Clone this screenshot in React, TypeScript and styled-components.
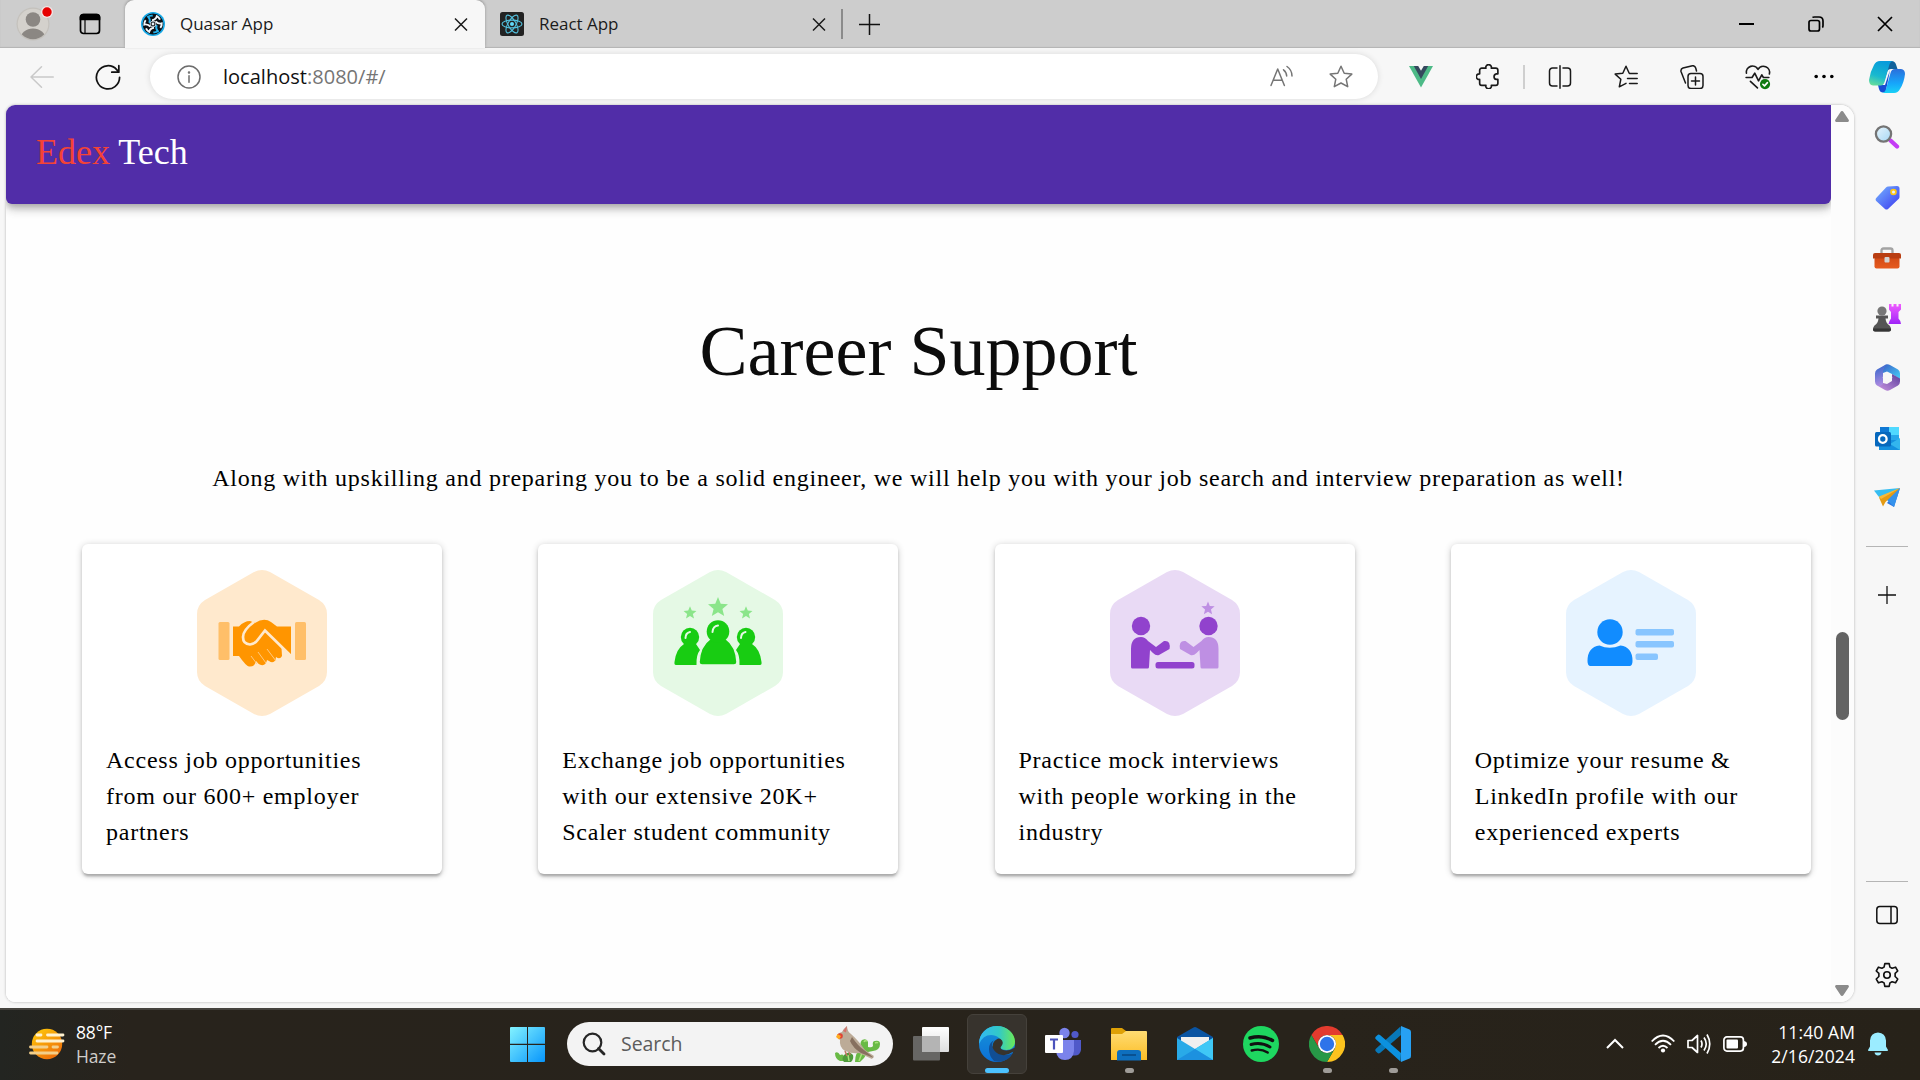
import React from "react";
import styled, { createGlobalStyle } from "styled-components";

const Global = createGlobalStyle`
  * { box-sizing: border-box; }
  html, body { margin: 0; padding: 0; overflow: hidden; }
  svg { display: block; flex: none; }
`;

const ui = `"Open Sans", "Noto Sans", sans-serif`;
const serif = `"Liberation Serif", "Times New Roman", serif`;

const Screen = styled.div`
  width: 1920px;
  height: 1080px;
  display: flex;
  flex-direction: column;
  background: #f7f7f7;
  font-family: ${ui};
  overflow: hidden;
`;

/* ---------- tab strip ---------- */
const TabStrip = styled.div`
  height: 48px;
  flex: none;
  display: flex;
  align-items: center;
  background: #cdcdcd;
  box-shadow: inset 0 -1px 1px #b4b4b4;
`;
const StripLead = styled.div`
  width: 125px;
  display: flex;
  align-items: center;
  padding-left: 14px;
  gap: 24px;
`;
const Tab = styled.div<{ $active?: boolean; $width: number }>`
  width: ${(p) => p.$width}px;
  height: 48px;
  display: flex;
  align-items: center;
  padding: 0 ${(p) => (p.$active ? 17 : 15)}px 0 ${(p) => (p.$active ? 16 : 15)}px;
  background: ${(p) => (p.$active ? "#f7f7f7" : "transparent")};
  border-radius: 9px 9px 0 0;
  box-shadow: ${(p) => (p.$active ? "0 -1px 3px rgba(0,0,0,.28)" : "none")};
`;
const TabTitle = styled.span`
  flex: 1;
  margin-left: 15px;
  font-size: 17px;
  letter-spacing: -0.03px;
  line-height: 24px;
  color: #1b1b1b;
`;
const TabRule = styled.div`
  width: 2px;
  height: 30px;
  background: #8b8b8b;
`;
const NewTab = styled.div`
  margin-left: 16px;
  flex: 1;
`;
const WindowButton = styled.div<{ $last?: boolean }>`
  width: ${(p) => (p.$last ? 70 : 69)}px;
  height: 46px;
  display: flex;
  align-items: center;
  justify-content: center;
`;

/* ---------- address bar ---------- */
const Toolbar = styled.div`
  height: 57px;
  flex: none;
  display: flex;
  align-items: center;
`;
const NavButtons = styled.div`
  width: 150px;
  display: flex;
  align-items: center;
  padding-left: 30px;
  gap: 41px;
`;
const AddressBar = styled.div`
  width: 1228px;
  height: 45px;
  border-radius: 23px;
  background: #fff;
  box-shadow: 0 0 6px rgba(0, 0, 0, 0.12);
  display: flex;
  align-items: center;
  padding: 0 25px 0 27px;
`;
const Url = styled.span`
  flex: 1;
  margin-left: 22px;
  font-size: 20px;
  line-height: 28px;
  letter-spacing: 0.02px;
  color: #111;
  span { color: #757575; }
`;
const AddressActions = styled.div`
  display: flex;
  gap: 35px;
  align-items: center;
`;
const ToolSlot = styled.div<{ $width?: number }>`
  width: ${(p) => p.$width ?? 66}px;
  display: flex;
  justify-content: center;
`;
const Tools = styled.div`
  margin-left: 10px;
  display: flex;
  align-items: center;
`;
const ToolRule = styled.div`
  width: 2px;
  height: 24px;
  margin: 0 2px 0 1px;
  background: #cfcfcf;
`;

/* ---------- body ---------- */
const Body = styled.div`
  height: 903px;
  flex: none;
  display: flex;
  padding-left: 6px;
`;
const FrameShadow = styled.div`
  height: 897px;
  border-radius: 9px 14px 14px 9px;
  box-shadow: 0 0 3px rgba(0, 0, 0, 0.28);
`;
const PageFrame = styled.div`
  width: 1848px;
  height: 897px;
  display: flex;
  border-radius: 9px 14px 14px 9px;
  overflow: hidden;
  background: #fff;
`;
const Page = styled.main`
  width: 1825px;
  overflow: hidden;
  font-family: ${serif};
  background: #fefefe;
`;
const SiteHeader = styled.header`
  height: 99px;
  padding: 20px 30px;
  background: #512da8;
  border-radius: 0 0 6px 6px;
  box-shadow: 0 3px 6px -1px rgba(0, 0, 0, 0.2), 0 6px 8px rgba(0, 0, 0, 0.14),
    0 2px 15px rgba(0, 0, 0, 0.12);
  color: #fff;
  font-size: 36px;
  line-height: 54px;
  white-space: pre;
`;
const Brand = styled.span`
  color: #f44336;
`;
const Heading = styled.h3`
  margin: 110px 0 0;
  font-size: 72px;
  line-height: 75px;
  font-weight: 400;
  text-align: center;
  color: #0c0c0c;
`;
const Lead = styled.p`
  margin: 71px 0 0;
  font-size: 24px;
  line-height: 36px;
  letter-spacing: 0.75px;
  text-align: center;
  color: #000;
`;
const CardGrid = styled.div`
  margin-top: 48px;
  padding-left: 76px;
  display: grid;
  grid-template-columns: repeat(4, 456.25px);
`;
const Card = styled.article`
  width: 360px;
  height: 330px;
  padding: 26px 24px 0;
  border-radius: 6px;
  background: #fff;
  box-shadow: 0 1px 7px rgba(0, 0, 0, 0.2), 0 3px 3px rgba(0, 0, 0, 0.14),
    0 4px 2px -2px rgba(0, 0, 0, 0.12);
  display: flex;
  flex-direction: column;
`;
const CardArt = styled.div`
  display: flex;
  justify-content: center;
  height: 172px;
`;
const CardLine = styled.div`
  font-size: 24px;
  line-height: 36px;
  letter-spacing: 0.75px;
  white-space: nowrap;
  color: #000;
`;
const ScrollTrack = styled.div`
  width: 23px;
  display: flex;
  flex-direction: column;
  align-items: center;
  padding: 6px 1px 6px 0;
  background: #fcfcfc;
`;
const ScrollThumb = styled.div`
  width: 13px;
  height: 88px;
  margin: 510px 0 auto;
  border-radius: 7px;
  background: #636363;
`;

/* ---------- edge sidebar ---------- */
const Sidebar = styled.aside`
  width: 66px;
  height: 903px;
  display: flex;
  flex-direction: column;
  align-items: center;
  padding-top: 2px;
`;
const SideSlot = styled.div`
  height: 60.2px;
  flex: none;
  display: flex;
  align-items: center;
`;
const SideRule = styled.div`
  width: 42px;
  height: 1px;
  flex: none;
  margin: 18px 0;
  background: #b5b5b5;
`;
const SideSpacer = styled.div`
  flex: 1;
`;
const SideBottom = styled.div`
  display: flex;
  flex-direction: column;
  align-items: center;
  height: 127px;
`;
const BottomRule = styled(SideRule)`
  margin: 0 0 3px;
`;

/* ---------- taskbar ---------- */
const Taskbar = styled.footer`
  height: 72px;
  flex: none;
  display: flex;
  align-items: center;
  padding-bottom: 2px;
  background: linear-gradient(90deg, #232521 0, #28231c 130px, #28231b 1300px, #272219 100%);
  border-top: 2px solid #45433e;
`;
const Weather = styled.div`
  width: 495px;
  display: flex;
  align-items: center;
  gap: 11px;
  padding-left: 28px;
`;
const Stack = styled.div<{ $right?: boolean }>`
  font-size: 17.5px;
  line-height: 24px;
  letter-spacing: ${(p) => (p.$right ? 0.1 : -0.15)}px;
  color: #fff;
  text-align: ${(p) => (p.$right ? "right" : "left")};
`;
const Dim = styled.div`
  color: #cfcdca;
`;
const StartButton = styled.div`
  width: 72px;
  display: flex;
  justify-content: flex-start;
  padding-left: 15px;
`;
const SearchBox = styled.div`
  width: 326px;
  height: 44px;
  border-radius: 22px;
  background: #f3f3f3;
  display: flex;
  align-items: center;
  padding: 0 12px 0 15px;
`;
const SearchLabel = styled.span`
  flex: 1;
  margin-left: 15px;
  font-size: 19.5px;
  line-height: 28px;
  letter-spacing: -0.05px;
  color: #5c5c5c;
`;
const Apps = styled.div`
  display: flex;
  gap: 6px;
  margin-left: 8px;
`;
const AppTile = styled.div<{ $active?: boolean }>`
  width: 60px;
  height: 60px;
  border-radius: 6px;
  border: 1px solid ${(p) => (p.$active ? "#45413b" : "transparent")};
  background: ${(p) => (p.$active ? "#37332d" : "transparent")};
  display: flex;
  flex-direction: column;
  align-items: center;
  padding-top: 11px;
`;
const AppMark = styled.div<{ $active?: boolean }>`
  width: ${(p) => (p.$active ? 24 : 9)}px;
  height: 5px;
  margin-top: 6px;
  border-radius: 3px;
  background: ${(p) => (p.$active ? "#4cc2ff" : "#9f9c98")};
`;
const Tray = styled.div`
  margin-left: auto;
  display: flex;
  align-items: center;
`;
const TrayIcons = styled.div`
  display: flex;
  align-items: center;
  gap: 12px;
  margin-left: 27px;
`;
const Clock = styled.div`
  width: 108px;
`;
const Bell = styled.div`
  margin: 0 32px 0 13px;
`;

/* ---------- line icons ---------- */
type LineProps = { size?: number; w?: number; color?: string; children: React.ReactNode };
const Line = ({ size = 24, w = 1.5, color = "#1a1a1a", children }: LineProps) => (
  <svg width={size} height={size} viewBox="0 0 24 24" fill="none" stroke={color} strokeWidth={w} strokeLinecap="round" strokeLinejoin="round">
    {children}
  </svg>
);

const Avatar = () => (
  <svg width="40" height="40" viewBox="0 0 40 40">
    <defs><clipPath id="av"><circle cx="19" cy="20" r="15.3" /></clipPath></defs>
    <circle cx="19" cy="20" r="16.5" fill="#c4c1bc" />
    <circle cx="19" cy="20" r="15.3" fill="#d4d1cc" />
    <g clipPath="url(#av)" fill="#8b8783">
      <circle cx="19" cy="15.5" r="7.3" />
      <ellipse cx="19" cy="35" rx="12.5" ry="10.5" />
    </g>
    <circle cx="33" cy="8" r="6" fill="#f3e4e4" />
    <circle cx="33" cy="8" r="4.7" fill="#e60000" />
  </svg>
);
const WorkspaceIcon = () => (
  <Line w={1.7} color="#000">
    <rect x="2.5" y="2.5" width="19" height="19" rx="3" />
    <path d="M2.5 7.5V5a2.5 2.5 0 0 1 2.5-2.5h14A2.5 2.5 0 0 1 21.5 5v2.5z" fill="#000" />
    <path d="M7 8v13" strokeWidth="1.2" />
  </Line>
);
const QuasarIcon = () => (
  <svg width="24" height="24" viewBox="0 0 24 24">
    <circle cx="12" cy="12" r="12" fill="#17a8e6" />
    <circle cx="12" cy="12" r="10.4" fill="#0b0f14" />
    {[0, 60, 120, 180, 240, 300].map((a, i) => (
      <path key={a} transform={`rotate(${a} 12 12)`} d="M11 8.3Q14.5 8 16 4.2M15 3.6Q18 5 19 7.6" fill="none" strokeWidth="1.9" stroke={i % 3 === 2 ? "#27b3ee" : "#f2f7fa"} />
    ))}
    <circle cx="12" cy="12" r="2.9" fill="none" stroke="#e9f4fa" strokeWidth=".8" />
    <circle cx="12" cy="12" r="1.4" fill="#e9f4fa" />
  </svg>
);
const ReactIcon = () => (
  <svg width="24" height="24" viewBox="0 0 24 24" fill="none" stroke="#53c1de" strokeWidth="1.1">
    <rect width="24" height="24" rx="2.5" fill="#222" stroke="none" />
    {[0, 60, 120].map((a) => <ellipse key={a} cx="12" cy="12" rx="10" ry="3.9" transform={`rotate(${a} 12 12)`} />)}
    <circle cx="12" cy="12" r="2" fill="#61dafb" stroke="none" />
  </svg>
);
const CloseIcon = () => (
  <svg width="14" height="14" viewBox="0 0 14 14" stroke="#1a1a1a" strokeWidth="1.5"><path d="M1 1.5 13 13.5M13 1.5 1 13.5" /></svg>
);
const PlusIcon = ({ size = 21 }: { size?: number }) => (
  <svg width={size} height={size} viewBox="0 0 21 21" stroke="#111" strokeWidth="1.5"><path d="M10.5 0v21M0 10.5h21" /></svg>
);
const BackIcon = () => <Line color="#c9c9c9"><path d="M23.3 12H1M11.5 1.8 1 12l10.5 10.2" /></Line>;
const ReloadIcon = () => (
  <Line size={26} w={1.6} color="#111"><path d="M22.7 12.3A10.7 10.7 0 1 1 20 5.2l1.7 2M22 1.5v6h-6.5" /></Line>
);
const InfoIcon = () => (
  <Line color="#6c6c6c"><circle cx="12" cy="12" r="11" /><path d="M12 10.7v6.5" /><circle cx="12" cy="7.4" r=".5" fill="#6c6c6c" /></Line>
);
const ReadAloudIcon = () => (
  <Line color="#757575"><path d="M1 20.5 7.7 4l6.7 16.5M3.2 15.3h9M13.5 4.8q3 2.3 3.2 6.2M17 1.5q5 3.5 5 9.5" /></Line>
);
const StarIcon = () => (
  <Line color="#757575"><path d="M12 1.3l3.2 6.9 7.6.9-5.6 5.1 1.5 7.5L12 18l-6.7 3.7 1.5-7.5L1.2 9.1l7.6-.9z" /></Line>
);
const VueIcon = () => (
  <svg width="24" height="22" viewBox="0 0 24 22"><path d="M0 0h24L12 21.5z" fill="#4dba87" /><path d="M4.8 0H19.2L12 13z" fill="#35495e" /><path d="M9.2 0h5.6L12 4.8z" fill="#f7f7f7" /></svg>
);
const PuzzleIcon = () => (
  <Line size={25} w={1.6}><path d="M5.5 4h4a2.7 2.7 0 1 1 5.2 0h4.3a2 2 0 0 1 2 2v3.500h-1.500a2.7 2.7 0 0 0 0 5.3H21V18.500a2 2 0 0 1-2 2h-4.300a2.7 2.7 0 1 1-5.200 0h-4a2 2 0 0 1-2-2v-3.700a2.7 2.7 0 1 1 0-5.300V6a2 2 0 0 1 2-2z" /></Line>
);
const SplitIcon = () => (
  <Line><path d="M9 3H4.500A3 3 0 0 0 1.500 6v12a3 3 0 0 0 3 3H9M15 3h4.500a3 3 0 0 1 3 3v12a3 3 0 0 1-3 3H15M12 .8v22.400" /></Line>
);
const FavoritesIcon = () => (
  <Line><path d="M8.800 8.200l-7.600.9 5.600 5.200-1.500 7.500L12 18.300M8.800 8.200 12 1.300l3.200 6.900M15.500 8.500h7.700M13.500 13.500h9.700M15.500 18.500h7.700" /></Line>
);
const CollectionsIcon = () => (
  <Line><rect x="8" y="8.500" width="15" height="15" rx="3" /><path d="M15.500 12v8M11.500 16h8M5.500 18 1 6.500Q.5 4 3 3l9.500-2.300Q15 .5 15.700 3l.8 3" /></Line>
);
const HeartIcon = () => (
  <Line size={26}><path d="M1.300 8.500A5.700 5.700 0 0 1 12 5a5.700 5.700 0 0 1 10.500 4.200M1 12.500h5.500l2.500-4 3.500 7 3-5.500 1.500 2.500h5M5 16l6.500 6" /><circle cx="18.500" cy="18.500" r="4.700" fill="#0f7b10" stroke="none" /><path d="m16.500 18.700 1.500 1.500 2.700-3" stroke="#fff" /></Line>
);
const DotsIcon = () => (
  <svg width="20" height="5" viewBox="0 0 20 5"><circle cx="2.2" cy="2.5" r="1.8" /><circle cx="10" cy="2.5" r="1.8" /><circle cx="17.8" cy="2.5" r="1.8" /></svg>
);
const CopilotIcon = () => (
  <svg width="36" height="34" viewBox="0 0 36 34">
    <defs>
      <linearGradient id="cp1" x1=".5" y1="0" x2=".2" y2="1"><stop stopColor="#079bdb" /><stop offset=".6" stopColor="#19b9cf" /><stop offset="1" stopColor="#68de9a" /></linearGradient>
      <linearGradient id="cp2" x1=".5" y1="0" x2=".5" y2="1"><stop stopColor="#2b6fdb" /><stop offset=".6" stopColor="#16a6fb" /><stop offset="1" stopColor="#19d0f6" /></linearGradient>
    </defs>
    <path d="M18 1h4.500q3.500 0 4.500 3.500L28.500 9H22q-3 0-4 3l-3 10z" fill="#10619b" />
    <path d="M9 25h7l5-15-4 20.500q-1 2.500-3 2-3 0-4-3.500z" fill="#164ed4" />
    <path d="M11 1h13q-3 .5-4 5l-4.500 16q-1 3.500-4 3.500H4Q0 25 0 20 1 12 5 5q2-4 6-4z" fill="url(#cp1)" />
    <path d="M25 33H13q3-.5 4-4l4.500-16q1-4 4.500-4h6q4 .5 4 5-1 9-5 15-2 4-6 4z" fill="url(#cp2)" />
  </svg>
);

/* ---------- sidebar icons ---------- */
const SearchColor = () => (
  <svg width="26" height="26" viewBox="0 0 26 26">
    <defs><linearGradient id="lens" x1="0" y1="0" x2="1" y2="1"><stop stopColor="#e8f5fd" /><stop offset="1" stopColor="#a6d8f4" /></linearGradient></defs>
    <path d="m16.500 16.500 6.500 6" stroke="#c43cf5" strokeWidth="4.300" strokeLinecap="round" />
    <circle cx="9.500" cy="10" r="7.600" fill="url(#lens)" stroke="#747474" strokeWidth="2.300" />
  </svg>
);
const TagColor = () => (
  <svg width="25" height="25" viewBox="0 0 25 25">
    <defs><linearGradient id="tg" x1="0" y1="0" x2="1" y2="1"><stop stopColor="#76b6ff" /><stop offset="1" stopColor="#3a36ef" /></linearGradient></defs>
    <path d="M13 1.500 22 1q2.500 0 2.500 2.500V12q0 1-.7 1.800L13 24q-1.500 1.200-3 0L1.200 16q-1.200-1.500 0-3L11 2.500Q12 1.500 13 1.500z" fill="url(#tg)" />
    <circle cx="18.500" cy="7" r="2.400" fill="#e8edff" stroke="#ffc712" strokeWidth="1.800" />
  </svg>
);
const ToolboxColor = () => (
  <svg width="28" height="24" viewBox="0 -2 28 24">
    <defs><linearGradient id="tb" x1="0" y1="0" x2="0" y2="1"><stop stopColor="#d24a15" /><stop offset="1" stopColor="#e65a1e" /></linearGradient></defs>
    <path d="M8.500 7V3.500q0-2 2-2h7q2 0 2 2V7" fill="none" stroke="#a3a3a3" strokeWidth="2.300" />
    <rect x="1.500" y="10" width="25" height="11.500" rx="2" fill="url(#tb)" />
    <path d="M0 8q0-2 2-2h24q2 0 2 2v3.500H0z" fill="#b93e12" />
    <rect x="11.500" y="10" width="5" height="5.500" rx="1" fill="#d3d3d3" />
  </svg>
);
const ChessColor = () => (
  <svg width="28" height="28" viewBox="0 0 28 28">
    <defs><linearGradient id="rk" x1="0" y1="0" x2="0" y2="1"><stop stopColor="#f05cff" /><stop offset="1" stopColor="#9f24f8" /></linearGradient></defs>
    <path d="M16 0h2.500v2.500h2V0h3v2.500h2V0H28v5.500L25.500 8v6.500q2.500 2.500 2.500 5.500H15.500q.5-3 2.500-5.500V8L16 5.500z" fill="url(#rk)" />
    <circle cx="9" cy="7" r="4.600" fill="#777" />
    <path d="M3 11.500h12v3h-2.500q.5 5 4 7 1.500 1.500 1.500 4 0 2-2 2H2q-2 0-2-2 0-2.500 1.500-4 3.500-2 4-7H3z" fill="#555" />
    <path d="M0 25.500q0 2 2 2h14q2 0 2-2v-1H0z" fill="#353535" />
  </svg>
);
const M365Color = () => (
  <svg width="25" height="27" viewBox="0 0 25 27">
    <defs>
      <linearGradient id="m1" x1=".2" y1="0" x2=".4" y2="1"><stop stopColor="#2f66cc" /><stop offset="1" stopColor="#b08be0" /></linearGradient>
      <linearGradient id="m2" x1="0" y1="0" x2="1" y2="1"><stop stopColor="#3a62c8" /><stop offset="1" stopColor="#46d0f8" /></linearGradient>
      <linearGradient id="m3" x1="0" y1="1" x2="1" y2="0"><stop stopColor="#c894e0" /><stop offset="1" stopColor="#5d3f9c" /></linearGradient>
    </defs>
    <path d="M10 1q2.500-1.300 5 0l8 4.500Q25 7 25 9.500V15l-8-5-5-2.500L8 9V5z" fill="url(#m2)" />
    <path d="M3 22l7 4q2.500 1.300 5 0l8-4.500q2-1.500 2-4V14.500l-8-4.500v7l-5 3-4-1z" fill="url(#m3)" />
    <path d="M10 1 2 5.500Q0 7 0 9.500v8Q0 20 2 21.500q2 1 4 0L8 20V7q.5-4 4-6.700z" fill="url(#m1)" />
    <circle cx="12.500" cy="13.500" r="4.700" fill="#f7f7f7" />
  </svg>
);
const OutlookColor = () => (
  <svg width="25" height="25" viewBox="0 0 25 25">
    <path d="M5 1h19v22H5z" fill="#28a8ea" /><path d="M14 1h10v8H14z" fill="#50d9ff" /><path d="M5 1h9v7H5z" fill="#0f78d4" />
    <path d="M4 14h21v10H4z" fill="#1490df" /><path d="M25 12v12l-10-6z" fill="#33b5ee" />
    <rect y="6" width="16" height="14.500" rx="1.500" fill="#0668bd" />
    <circle cx="7.800" cy="13" r="3.800" fill="none" stroke="#fff" strokeWidth="2.300" />
  </svg>
);
const PlaneColor = () => (
  <svg width="26" height="20" viewBox="0 0 26 20">
    <path d="M0 2.500 26 0 9 12 5 9z" fill="#35bdf1" />
    <path d="M26 0 20 19l-7-4z" fill="#2a73df" /><path d="M26 0 10 9l10 10z" fill="#3492ec" />
    <path d="M26 0 5 9.500l4 9L11.500 14z" fill="#e49b14" /><path d="M26 0 5 8.500l2 2.500z" fill="#f6b93a" />
  </svg>
);
const PanelIcon = () => (
  <svg width="22" height="20" viewBox="0 0 22 20" fill="none" stroke="#111" strokeWidth="1.500"><rect x=".8" y="1.500" width="20.400" height="17" rx="3" /><path d="M15 1.500v17" /></svg>
);
const GearIcon = () => (
  <Line size={26} w={1.5} color="#111">
    <path d="M10 1.500h4l.7 3.200 2 1.100 3.200-1 2 3.500-2.400 2.200v2.900l2.400 2.300-2 3.500-3.200-1-2 1.100-.7 3.200h-4l-.7-3.200-2-1.100-3.200 1-2-3.500 2.400-2.300v-2.900L2.100 8.300l2-3.500 3.200 1 2-1.100z" /><circle cx="12" cy="12" r="3" />
  </Line>
);

/* ---------- card art ---------- */
const Hexagon = ({ fill, children }: { fill: string; children: React.ReactNode }) => (
  <svg width="130" height="146" viewBox="0 0 130 146">
    <path d="M57 2Q65-2 73 2L122 30Q130 35 130 44V102Q130 111 122 116L73 144Q65 148 57 144L8 116Q0 111 0 102V44Q0 35 8 30Z" fill={fill} />
    {children}
  </svg>
);
const Star = ({ x, y, s, fill }: { x: number; y: number; s: number; fill: string }) => (
  <path transform={`translate(${x} ${y}) scale(${s})`} fill={fill} d="M0-1 .26-.36.95-.31.42.14.59.81 0 .45-.59.81-.42.14-.95-.31-.26-.36Z" />
);
const HandshakeArt = () => (
  <Hexagon fill="#ffe9cd">
    <rect x="21.500" y="52" width="11" height="38" rx="1.500" fill="#ffbf69" />
    <rect x="98" y="52" width="11" height="38" rx="1.500" fill="#ffbf69" />
    <path d="M36 56.500H42Q47 51 53 51L58 53Q67 47 74 52L80 56.500H94V86L84.500 78 85 86Q83 90 79 87L78.500 90Q76 94 72 91L70 90Q69 96 64 95Q61 94 59 91Q58 97 52 96.500Q49 96 42 86H36Z" fill="#ff9500" />
    <path d="M57 52Q46 60 46 67 46 74 53 74.500 58 74 61 69.500L68 60.500 95 87" fill="none" stroke="#ffe9cd" strokeWidth="2.700" />
    <path d="m54 86 6 8m1-12 8 11m1-14 9 12" stroke="#ffcf8e" strokeWidth=".9" />
  </Hexagon>
);
const SidePerson = () => (
  <>
    <circle cx="37" cy="67" r="9.200" />
    <path d="M31 74H43L47 80Q43 85 43.500 95H23Q21 95 21.500 92 23 79 31 74Z" />
  </>
);
const CommunityArt = () => (
  <Hexagon fill="#e5f9e5">
    <Star x={65} y={37.5} s={10.5} fill="#8be58a" />
    <Star x={37} y={43} s={6.8} fill="#8be58a" />
    <Star x={93} y={43} s={6.8} fill="#8be58a" />
    <g fill="#18cc12">
      <SidePerson />
      <g transform="translate(130 0) scale(-1 1)"><SidePerson /></g>
      <path d="M57 69Q47 76 46 92 46 95 49 95H81Q84 95 84 92 83 76 73 69Z" stroke="#e5f9e5" strokeWidth="1.500" />
      <circle cx="65" cy="61.500" r="11.300" />
    </g>
    <path d="M32.500 68Q32.500 63 37 62M59.500 62Q60 56 65 55.500M88 68Q88 63 92.500 62" fill="none" stroke="#e5f9e5" strokeWidth="2" strokeLinecap="round" />
  </Hexagon>
);
const bodyPath = "M21 97V79Q21 67 31 67 35 67 38 71L46 77 54 71Q61 70 59.500 79L49 85Q46 86 43 83L40 80 39 97Q39 98.500 37.500 98.500H22.500Q21 98.500 21 97Z";
const InterviewArt = () => (
  <Hexagon fill="#e9daf5">
    <Star x={98} y={38.5} s={7} fill="#be8fe3" />
    <circle cx="31" cy="56" r="9.200" fill="#9142cd" />
    <circle cx="98.500" cy="56" r="9.200" fill="#9142cd" />
    <path d={bodyPath} fill="#9142cd" />
    <path d={bodyPath} fill="#be8fe3" transform="translate(129.500 0) scale(-1 1)" />
    <rect x="45.500" y="92" width="39" height="6.500" rx="2.500" fill="#9142cd" />
  </Hexagon>
);
const ResumeArt = () => (
  <Hexagon fill="#e6f3ff">
    <circle cx="44" cy="62" r="12.700" fill="#118cff" />
    <path d="M33.500 75.500Q43.500 80 54.500 75.500 66.500 77 66.500 91 66.500 96 63.500 96H24.500Q21.500 96 21.500 91 21.500 77 33.500 75.500Z" fill="#118cff" />
    <g fill="#88c5ff"><rect x="69.500" y="59" width="38.500" height="6.500" rx="2" /><rect x="69.500" y="71" width="38.500" height="6.500" rx="2" /><rect x="69.500" y="83.500" width="22.500" height="6.500" rx="2" /></g>
  </Hexagon>
);

/* ---------- taskbar icons ---------- */
const HazeIcon = () => (
  <svg width="37" height="34" viewBox="0 0 37 34">
    <defs><linearGradient id="sun" x1="0" y1="0" x2=".7" y2="1"><stop stopColor="#ffcf0a" /><stop offset="1" stopColor="#ee6d09" /></linearGradient></defs>
    <circle cx="19" cy="17" r="15.200" fill="url(#sun)" />
    <g strokeWidth="2.800" strokeLinecap="round"><path d="M9 8h4M19.500 8H35M9 14h26" stroke="#fff1cf" /><path d="M2.500 20H19M25 20h4.500M2.500 26H29" stroke="#f3cf8a" /></g>
  </svg>
);
const WindowsIcon = () => (
  <svg width="35" height="35" viewBox="0 0 35 35">
    <defs><linearGradient id="win" gradientUnits="userSpaceOnUse" x1="0" y1="0" x2="35" y2="35"><stop stopColor="#83f3ff" /><stop offset="1" stopColor="#0795fb" /></linearGradient></defs>
    <path d="M1 0h16v16.800H0V1q0-1 1-1zM18 0h16q1 0 1 1v15.800H18zM0 18h17v17H1q-1 0-1-1zM18 18h17v16q0 1-1 1H18z" fill="url(#win)" />
  </svg>
);
const MagnifierIcon = () => (
  <svg width="24" height="24" viewBox="0 0 24 24" fill="none" stroke="#262626" strokeWidth="2.200"><circle cx="10.500" cy="10.500" r="8.800" /><path d="m16.500 16.500 5.500 5.500" strokeWidth="2.800" strokeLinecap="round" /></svg>
);
const BirdIcon = () => (
  <svg width="47" height="38" viewBox="0 0 47 38">
    <g fill="#69ba45">
      <path d="M1 28q3-2 5 2 4-2 4 3l2 3H6Q1 34 1 28z" />
      <path d="M10 30q5-5 9 0 1 4-2 7H10q-3-3 0-7z" fill="#4f9a3b" />
      <path d="M21 37q0-10 7-14-3-5 0-8 5-2 6 2v5q4 1 5-1-1-5 2-5 5-1 5 3 0 6-7 7l-5 1-4 6-4 4z" />
    </g>
    <path d="M30 17q1-2 3-1M41 18q2-1 3 0M14 30l1 6M28 28l-3 8" stroke="#a9e27a" strokeWidth="1.500" fill="none" />
    <path d="M11 26l2 5M15 26l1 4" stroke="#c67262" strokeWidth="1.500" />
    <path d="M13 1Q9 4 8 7 3 8 3 12l3 3Q5 22 11 26q8 3 14 2l13 6 2-3-9-6Q24 15 17 9 13 6 13 1z" fill="#bcab97" />
    <path d="M18 12q6 9 12 13l10 8-13-5Q19 23 16 16z" fill="#87705f" />
    <path d="M13 1 9 6l3 1.500z" fill="#d3706b" />
    <circle cx="6" cy="11" r="2.800" fill="#e04435" /><path d="M3.500 9 2 12l3 2.500L7 11z" fill="#ffab22" />
  </svg>
);
const TaskViewIcon = () => (
  <svg width="36" height="36" viewBox="0 0 36 36">
    <defs><linearGradient id="tv" x1="0" y1="0" x2="0" y2="1"><stop stopColor="#fff" /><stop offset="1" stopColor="#dedede" /></linearGradient></defs>
    <rect x="9" y="1" width="27" height="25" rx="1" fill="url(#tv)" /><rect y="10" width="27" height="24.500" rx="1" fill="#777" fillOpacity=".8" /><path d="M9 10h18v16H9z" fill="#b4b4b4" />
  </svg>
);
const EdgeIcon = () => (
  <svg width="36" height="36" viewBox="0 0 36 36">
    <defs>
      <linearGradient id="e1" x1="0" y1=".5" x2="1" y2=".5"><stop stopColor="#32b9f4" /><stop offset=".55" stopColor="#32c9c8" /><stop offset="1" stopColor="#6bea57" /></linearGradient>
      <linearGradient id="e2" x1="0" y1="0" x2="0" y2="1"><stop stopColor="#1793d8" /><stop offset="1" stopColor="#0b70d8" /></linearGradient>
    </defs>
    <circle cx="18" cy="18" r="18" fill="url(#e2)" />
    <path d="M0 18C0 7 8 0 18 0s18 7.500 18 15.500C36 21 32 24 27.500 24c-3.500 0-6-1-6-2.500s1.500-2 1.500-5S18 9 12 9Q4 9 0 18z" fill="url(#e1)" />
    <path d="M16 14q-6 2-6 9t5 12Q28 38 34 27q-7 3.500-13 .5t-8-8Q13 15 16 14z" fill="#114e94" />
    <path d="M17.500 13.500q-4 2-4 7.500 1 4 6 7 7 3 14-2 2-1 1 1 2-3 1.500-5.500-6 4-12 2.500-4-1.500-1.500-4 3-4-1-7-2-1-4 .5z" fill="#37332d" />
  </svg>
);
const TeamsIcon = () => (
  <svg width="36" height="36" viewBox="0 0 36 36">
    <circle cx="30" cy="8.500" r="3.600" fill="#5059c9" /><circle cx="19.500" cy="7" r="5.200" fill="#7b83eb" />
    <path d="M26 14h10v10q-1 6-7 5.500h-4z" fill="#5059c9" /><path d="M11 14h18v11q-1 9-9 9t-9-9z" fill="#7b83eb" />
    <rect y="9" width="18" height="18" rx="1" fill="#fff" /><path d="M5 13.500h8M9 13.500V23.500" stroke="#4b53bc" strokeWidth="2.200" fill="none" />
  </svg>
);
const FolderIcon = () => (
  <svg width="36" height="36" viewBox="0 0 36 36">
    <defs><linearGradient id="fd" x1="0" y1="0" x2="0" y2="1"><stop stopColor="#ffdc73" /><stop offset="1" stopColor="#fcbd25" /></linearGradient></defs>
    <path d="M0 3q0-1 1-1h10l4 3v8H0z" fill="#dfa106" /><path d="M0 8h11l4-3h20q1 0 1 1v28H0z" fill="url(#fd)" />
    <path d="M6 34.500V27q0-3 3-3h18q3 0 3 3v7.500z" fill="#0e6fbe" /><path d="M11 29h14" stroke="#094b86" strokeWidth="1.600" />
  </svg>
);
const MailIcon = () => (
  <svg width="36" height="36" viewBox="0 0 36 36">
    <path d="M0 11 16.500 1.500q1.500-1 3 0L36 11v8H0z" fill="#0a54a2" /><path d="M4 11h28v10l-14 6-14-6z" fill="#f0f0f0" /><path d="M0 12l18 11L36 12v22H0z" fill="#29aae8" /><path d="m36 12-18 11 18 11z" fill="#3fc8f6" /><path d="M0 34h36L18 23z" fill="#1c91df" />
  </svg>
);
const SpotifyIcon = () => (
  <svg width="36" height="36" viewBox="0 0 36 36"><circle cx="18" cy="18" r="18" fill="#1ed760" /><g fill="none" stroke="#111" strokeLinecap="round"><path d="M7 12q12-3.500 22.500 2.500" strokeWidth="3.500" /><path d="M8 18.500q10-3 19 2.500" strokeWidth="2.900" /><path d="M8.700 24.500q9-2.500 16 2" strokeWidth="2.400" /></g></svg>
);
const ChromeIcon = () => (
  <svg width="36" height="36" viewBox="0 0 36 36">
    <path d="M2.400 9A18 18 0 0 1 33.600 9H18a9 9 0 0 0-7.800 13.500z" fill="#e33b2e" />
    <path d="M33.600 9A18 18 0 0 1 18 36l7.800-13.500A9 9 0 0 0 18 9z" fill="#fcc31e" />
    <path d="M18 36A18 18 0 0 1 2.400 9l7.800 13.500A9 9 0 0 0 25.800 22.500z" fill="#279847" />
    <circle cx="18" cy="18" r="9" fill="#fff" /><circle cx="18" cy="18" r="7.200" fill="#2d74ea" />
  </svg>
);
const CodeIcon = () => (
  <svg width="36" height="36" viewBox="0 0 36 36">
    <path d="m26 9-21 18q-1.500 1-2.700-.2L.7 25.200q-1-1.200.2-2.400L25.500.5z" fill="#0878b9" />
    <path d="M26 27 5 9Q3.500 8 2.300 9.200L.7 10.800q-1 1.200.2 2.400L25.500 35.500z" fill="#0c91df" />
    <path d="m26 0 8.500 3.500Q36 4 36 6v24q0 2-1.500 2.500L26 36z" fill="#27a1f3" />
  </svg>
);
const ChevronIcon = () => <svg width="18" height="12" viewBox="0 0 18 12" fill="none" stroke="#fff" strokeWidth="2"><path d="m1 10 8-8 8 8" /></svg>;
const WifiIcon = () => (
  <svg width="24" height="20" viewBox="0 0 24 20" fill="none" stroke="#fff" strokeWidth="1.800"><path d="M.7 7.500Q12-4.500 23.300 7.500M4 10.800q8-8 16 0M7.500 14q4.500-4.500 9 0" /><circle cx="12" cy="16.500" r="2.100" fill="#fff" stroke="none" /></svg>
);
const SpeakerIcon = () => (
  <svg width="24" height="22" viewBox="0 0 24 22" fill="none" stroke="#fff" strokeWidth="1.700" strokeLinejoin="round"><path d="M1 7.500h4L10.500 2.500v17L5 14.500H1zM14 7.500q2 3.500 0 7M17 4.500q4.500 6.500 0 13M20 1.500q5.500 9.500 0 19" /></svg>
);
const BatteryIcon = () => (
  <svg width="24" height="16" viewBox="0 0 24 16"><rect x=".9" y=".9" width="19.500" height="14.200" rx="3" fill="none" stroke="#fff" strokeWidth="1.700" /><rect x="3.500" y="3.500" width="11.500" height="9" rx="1" fill="#fff" /><path d="M21 5q3 .5 3 3t-3 3z" fill="#fff" /></svg>
);
const BellIcon = () => (
  <svg width="20" height="24" viewBox="0 0 20 24" fill="#9becff"><path d="M10 .5Q17.500 1 18 8.500V14.500L20 18q.3 1-1 1H1q-1.300 0-1-1l2-3.500V8.500Q2.500 1 10 .5zM6.500 20.500h7q-.5 3-3.500 3t-3.500-3z" /></svg>
);

const cards = [
  { art: <HandshakeArt />, lines: ["Access job opportunities", "from our 600+ employer", "partners"] },
  { art: <CommunityArt />, lines: ["Exchange job opportunities", "with our extensive 20K+", "Scaler student community"] },
  { art: <InterviewArt />, lines: ["Practice mock interviews", "with people working in the", "industry"] },
  { art: <ResumeArt />, lines: ["Optimize your resume &", "LinkedIn profile with our", "experienced experts"] },
];
const sideApps = [SearchColor, TagColor, ToolboxColor, ChessColor, M365Color, OutlookColor, PlaneColor];
const taskApps = [
  { Icon: TaskViewIcon }, { Icon: EdgeIcon, active: true }, { Icon: TeamsIcon }, { Icon: FolderIcon, open: true },
  { Icon: MailIcon }, { Icon: SpotifyIcon }, { Icon: ChromeIcon, open: true }, { Icon: CodeIcon, open: true },
];

export default function App() {
  return (
    <Screen>
      <Global />
      <TabStrip>
        <StripLead><Avatar /><WorkspaceIcon /></StripLead>
        <Tab $active $width={360}><QuasarIcon /><TabTitle>Quasar App</TabTitle><CloseIcon /></Tab>
        <Tab $width={356}><ReactIcon /><TabTitle>React App</TabTitle><CloseIcon /></Tab>
        <TabRule />
        <NewTab><PlusIcon /></NewTab>
        <WindowButton><svg width="15" height="2" viewBox="0 0 15 2"><path d="M0 0h15v2H0z" /></svg></WindowButton>
        <WindowButton>
          <svg width="16" height="16" viewBox="0 0 16 16" fill="none" stroke="#000" strokeWidth="1.700"><rect x="1" y="4.500" width="10.500" height="10.500" rx="2" /><path d="M4.500 1.500Q5 1 6.500 1H11q4 0 4 4v4.500q0 1.500-.7 2" /></svg>
        </WindowButton>
        <WindowButton $last><svg width="16" height="16" viewBox="0 0 16 16" stroke="#000" strokeWidth="1.700"><path d="m1 1 14 14M15 1 1 15" /></svg></WindowButton>
      </TabStrip>

      <Toolbar>
        <NavButtons><BackIcon /><ReloadIcon /></NavButtons>
        <AddressBar>
          <InfoIcon />
          <Url>localhost<span>:8080/#/</span></Url>
          <AddressActions><ReadAloudIcon /><StarIcon /></AddressActions>
        </AddressBar>
        <Tools>
          <ToolSlot><VueIcon /></ToolSlot>
          <ToolSlot $width={68}><PuzzleIcon /></ToolSlot>
          <ToolRule />
          <ToolSlot><SplitIcon /></ToolSlot>
          <ToolSlot><FavoritesIcon /></ToolSlot>
          <ToolSlot><CollectionsIcon /></ToolSlot>
          <ToolSlot><HeartIcon /></ToolSlot>
          <ToolSlot><DotsIcon /></ToolSlot>
          <ToolSlot $width={60}><CopilotIcon /></ToolSlot>
        </Tools>
      </Toolbar>

      <Body>
        <FrameShadow>
          <PageFrame>
            <Page>
              <SiteHeader><Brand>Edex</Brand> Tech</SiteHeader>
              <Heading>Career Support</Heading>
              <Lead>Along with upskilling and preparing you to be a solid engineer, we will help you with your job search and interview preparation as well!</Lead>
              <CardGrid>
                {cards.map((c) => (
                  <Card key={c.lines[0]}>
                    <CardArt>{c.art}</CardArt>
                    {c.lines.map((l) => <CardLine key={l}>{l}</CardLine>)}
                  </Card>
                ))}
              </CardGrid>
            </Page>
            <ScrollTrack>
              <svg width="14" height="11" viewBox="0 0 14 11"><path d="M7 0Q8 0 8.500 1l5.300 8q.5 1.700-1 2H1.200q-1.500-.3-1-2l5.300-8Q6 0 7 0z" fill="#8b8b8b" /></svg>
              <ScrollThumb />
              <svg width="14" height="11" viewBox="0 0 14 11"><path d="M7 11q1 0 1.500-1l5.300-8q.5-1.700-1-2H1.200q-1.500.3-1 2l5.300 8q.5 1 1.500 1z" fill="#8b8b8b" /></svg>
            </ScrollTrack>
          </PageFrame>
        </FrameShadow>
        <Sidebar>
          {sideApps.map((Icon, i) => <SideSlot key={i}><Icon /></SideSlot>)}
          <SideRule />
          <SideSlot><PlusIcon size={18} /></SideSlot>
          <SideSpacer />
          <SideBottom>
            <BottomRule />
            <SideSlot><PanelIcon /></SideSlot>
            <SideSlot><GearIcon /></SideSlot>
          </SideBottom>
        </Sidebar>
      </Body>

      <Taskbar>
        <Weather><HazeIcon /><Stack><div>88°F</div><Dim>Haze</Dim></Stack></Weather>
        <StartButton><WindowsIcon /></StartButton>
        <SearchBox><MagnifierIcon /><SearchLabel>Search</SearchLabel><BirdIcon /></SearchBox>
        <Apps>
          {taskApps.map(({ Icon, active, open }, i) => (
            <AppTile key={i} $active={active}><Icon />{(active || open) && <AppMark $active={active} />}</AppTile>
          ))}
        </Apps>
        <Tray>
          <ChevronIcon />
          <TrayIcons><WifiIcon /><SpeakerIcon /><BatteryIcon /></TrayIcons>
          <Clock><Stack $right><div>11:40 AM</div><div>2/16/2024</div></Stack></Clock>
          <Bell><BellIcon /></Bell>
        </Tray>
      </Taskbar>
    </Screen>
  );
}
